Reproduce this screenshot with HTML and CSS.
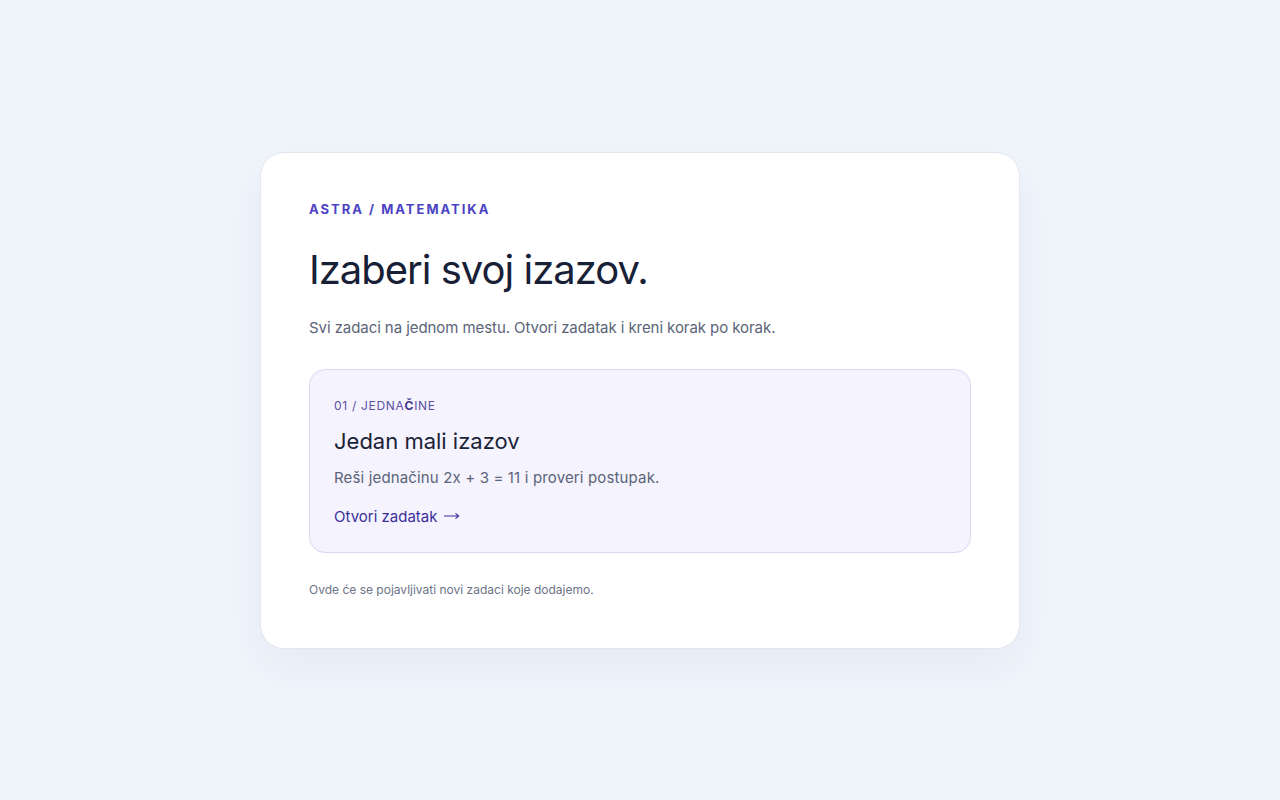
FILE: index.html
```html
<!DOCTYPE html>
<html lang="sr">
<head>
  <meta charset="UTF-8">
  <title>Astra / Matematika</title>
  <link rel="stylesheet" href="styles.css">
</head>
<body>
  <main class="panel">
    <div class="eyebrow">Astra / Matematika</div>
    <h1>Izaberi svoj izazov.</h1>
    <p class="lead">Svi zadaci na jednom mestu. Otvori zadatak i kreni korak po korak.</p>

    <!-- lista zadataka -->
    <article class="task">
      <div class="task-meta">01 / Jedna<b>č</b>ine</div>
      <h2>Jedan mali izazov</h2>
      <p class="task-desc">Reši jednačinu 2x + 3 = 11 i proveri postupak.</p>
      <a class="task-link" href="#">Otvori zadatak
        <svg class="arrow" width="17" height="8" viewBox="0 0 17 8" aria-hidden="true">
          <path d="M1 4H15.5M12.5 1.3L15.6 4L12.5 6.7" fill="none" stroke="currentColor" stroke-width="1.1"/>
        </svg>
      </a>
    </article>

    <p class="note">Ovde će se pojavljivati novi zadaci koje dodajemo.</p>
  </main>
</body>
</html>
```

FILE: styles.css
```css
* { box-sizing: border-box; }

body {
  margin: 0;
  min-height: 100vh;
  display: flex;
  align-items: center;
  justify-content: center;
  background: #f0f4fb;
  font-family: "Inter", "Liberation Sans", sans-serif;
  color: #172036;
}

.panel {
  width: 760px;
  padding: 47px 48px 49px;
  background: #fff;
  border: 1px solid #e1e6ef;
  border-radius: 24px;
  box-shadow: 0 18px 48px rgba(30, 50, 100, 0.05);
}

.eyebrow {
  font-size: 13px;
  line-height: 18px;
  font-weight: 700;
  letter-spacing: 2px;
  text-transform: uppercase;
  color: #4c42c4;
}

h1 {
  margin: 28px 0 0;
  font-size: 40px;
  line-height: 48px;
  font-weight: 400;
  letter-spacing: -1px;
  color: #172036;
}

.lead {
  margin: 22px 0 0;
  font-size: 15px;
  line-height: 24px;
  letter-spacing: -0.07px;
  color: #5b6478;
}

.task {
  margin-top: 29px;
  padding: 27px 24px 23px;
  background: #f5f3fe;
  border: 1px solid #ddd7f2;
  border-radius: 16px;
}

.task-meta {
  font-size: 12px;
  line-height: 18px;
  letter-spacing: 0.7px;
  text-transform: uppercase;
  color: #5a4fa3;
}

.task-meta b {
  font-weight: 700;
  color: #3f358f;
}

.task h2 {
  margin: 11px 0 0;
  font-size: 22px;
  line-height: 30px;
  font-weight: 400;
  color: #1b2236;
}

.task-desc {
  margin: 10px 0 0;
  font-size: 15px;
  line-height: 24px;
  letter-spacing: 0.15px;
  color: #5b6478;
}

.task-link {
  display: inline-block;
  margin-top: 15px;
  font-size: 15px;
  line-height: 24px;
  color: #3a2f99;
  text-decoration: none;
}

.arrow {
  margin-left: 1px;
  vertical-align: 2px;
}

.note {
  margin: 28px 0 0;
  font-size: 12px;
  line-height: 18px;
  color: #6b7386;
}
```
